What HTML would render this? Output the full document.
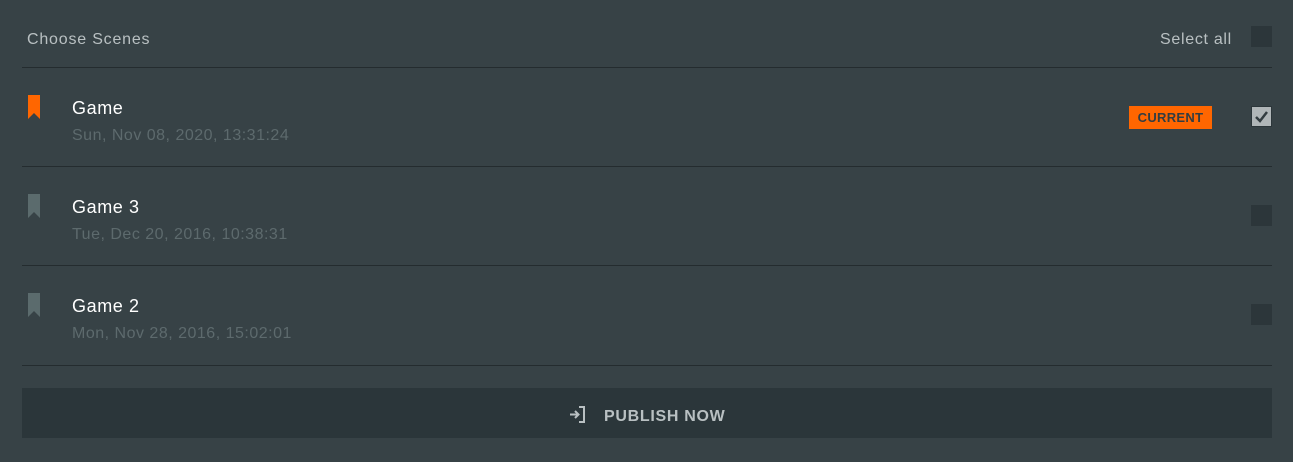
<!DOCTYPE html>
<html><head><style>
body{margin:0;width:1293px;height:462px;background:#374246;font-family:"Liberation Sans",sans-serif;position:relative;overflow:hidden}
.a{position:absolute}
.line{position:absolute;left:22px;width:1250px;height:1px;background:#242c2f}
.cb{position:absolute;left:1251px;width:21px;height:21px;background:#2c363a;box-sizing:border-box}
.t{position:absolute;left:72px;font-size:18px;color:#fff;letter-spacing:0.6px}
.d{position:absolute;left:72px;font-size:16px;color:#5d6a6d;letter-spacing:0.5px}
</style></head><body>
<div class="a" style="left:27px;top:31px;font-size:16px;color:#b9c0c2;letter-spacing:0.8px">Choose Scenes</div>
<div class="a" style="left:1160px;top:31px;font-size:16px;color:#b9c0c2;letter-spacing:0.7px">Select all</div>
<div class="cb" style="top:26px"></div>
<div class="line" style="top:67px"></div>
<div class="line" style="top:166px"></div>
<div class="line" style="top:265px"></div>
<div class="line" style="top:365px"></div>

<svg class="a" style="left:28px;top:95px" width="13" height="24"><path d="M0 0H12V24L6 18L0 24Z" fill="#ff6600"/></svg>
<div class="t" style="top:98px">Game</div>
<div class="d" style="top:127px">Sun, Nov 08, 2020, 13:31:24</div>
<div class="a" style="left:1129px;top:106px;width:83px;height:23px;background:#ff6600;color:#333d41;font-weight:bold;font-size:13px;line-height:24px;text-align:center;letter-spacing:0.3px">CURRENT</div>
<div class="cb" style="top:106px;background:#b0b6b8;border:1px solid #2c363a"><svg width="19" height="19"><path d="M4 10L8 14L15 5" stroke="#333d41" stroke-width="2.5" fill="none"/></svg></div>

<svg class="a" style="left:28px;top:194px" width="13" height="24"><path d="M0 0H12V24L6 18L0 24Z" fill="#5b6b6d"/></svg>
<div class="t" style="top:197px">Game 3</div>
<div class="d" style="top:226px">Tue, Dec 20, 2016, 10:38:31</div>
<div class="cb" style="top:205px"></div>

<svg class="a" style="left:28px;top:293px" width="13" height="24"><path d="M0 0H12V24L6 18L0 24Z" fill="#5b6b6d"/></svg>
<div class="t" style="top:296px">Game 2</div>
<div class="d" style="top:325px">Mon, Nov 28, 2016, 15:02:01</div>
<div class="cb" style="top:304px"></div>

<div class="a" style="left:22px;top:388px;width:1250px;height:50px;background:#2b363a"></div>
<svg class="a" style="left:569px;top:406px" width="18" height="18"><path d="M1 8.5H9M6 5L9.5 8.5L6 12" stroke="#b9c0c2" stroke-width="2" fill="none"/><path d="M10 1H15V16H10" stroke="#b9c0c2" stroke-width="2" fill="none"/></svg>
<div class="a" style="left:604px;top:408px;font-size:16px;font-weight:bold;color:#b9c0c2;letter-spacing:0.7px">PUBLISH NOW</div>
</body></html>
